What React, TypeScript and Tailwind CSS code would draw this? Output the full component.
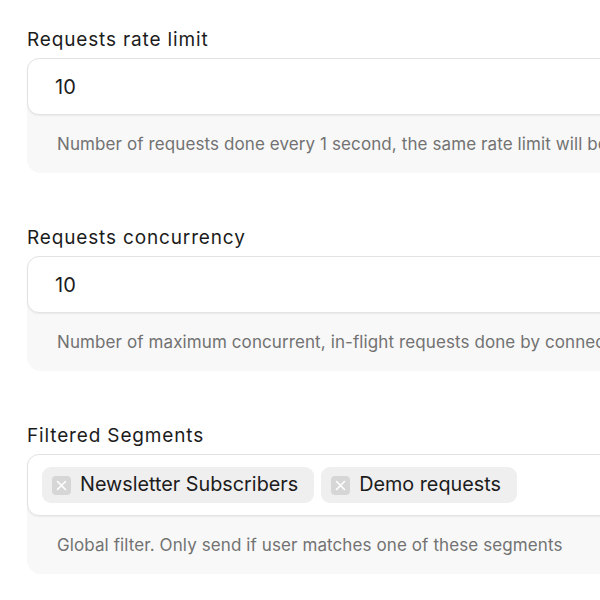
import React from "react";

function XIcon() {
  return (
    <span className="flex h-[19px] w-[19px] items-center justify-center rounded-[4px] bg-[#d6d6d6]">
      <svg width="11" height="11" viewBox="0 0 11 11" fill="none">
        <path d="M1.5 1.5L9.5 9.5M9.5 1.5L1.5 9.5" stroke="#ffffff" strokeWidth="1.6" strokeLinecap="round" />
      </svg>
    </span>
  );
}

function Chip({ label }: { label: string }) {
  return (
    <span className="flex h-[36px] items-center gap-[9px] rounded-[9px] bg-[#efefef] pl-[10px] pr-[16px] text-[19.8px] text-[#1c1c1c]">
      <XIcon />
      <span>{label}</span>
    </span>
  );
}

function Field({
  label,
  help,
  children,
}: {
  label: string;
  help: string;
  children: React.ReactNode;
}) {
  return (
    <div className="flex flex-col">
      <div className="mb-[7px] text-[19px] leading-[22px] tracking-[0.85px] text-[#1c1c1c]">{label}</div>
      <div className="flex flex-col rounded-[14px] bg-[#f8f8f8]">
        {children}
        <div className="pl-[30px] pr-[29px] py-[18px] text-[17px] leading-[22px] tracking-[0.1px] text-[#727272] whitespace-nowrap">{help}</div>
      </div>
    </div>
  );
}

export default function App() {
  return (
    <div
      className="h-[600px] w-[600px] overflow-hidden bg-white"
      style={{ fontFamily: "Inter, 'Noto Sans', sans-serif" }}
    >
      <div className="flex w-[800px] flex-col gap-[54px] pl-[27px] pt-[29px]">
        <Field
          label="Requests rate limit"
          help="Number of requests done every 1 second, the same rate limit will be applied to all connectors"
        >
          <div className="flex h-[57px] items-center rounded-[12px] border border-[#e3e3e3] bg-white px-[27px] text-[20px] text-[#1c1c1c] shadow-[0_1px_2px_rgba(0,0,0,0.06)]">
            10
          </div>
        </Field>
        <Field
          label="Requests concurrency"
          help="Number of maximum concurrent, in-flight requests done by connectors at any time"
        >
          <div className="flex h-[57px] items-center rounded-[12px] border border-[#e3e3e3] bg-white px-[27px] text-[20px] text-[#1c1c1c] shadow-[0_1px_2px_rgba(0,0,0,0.06)]">
            10
          </div>
        </Field>
        <Field
          label="Filtered Segments"
          help="Global filter. Only send if user matches one of these segments"
        >
          <div className="flex h-[62px] items-center gap-[7px] rounded-[12px] border border-[#e3e3e3] bg-white px-[14px] shadow-[0_1px_2px_rgba(0,0,0,0.06)]">
            <Chip label="Newsletter Subscribers" />
            <Chip label="Demo requests" />
          </div>
        </Field>
      </div>
    </div>
  );
}
